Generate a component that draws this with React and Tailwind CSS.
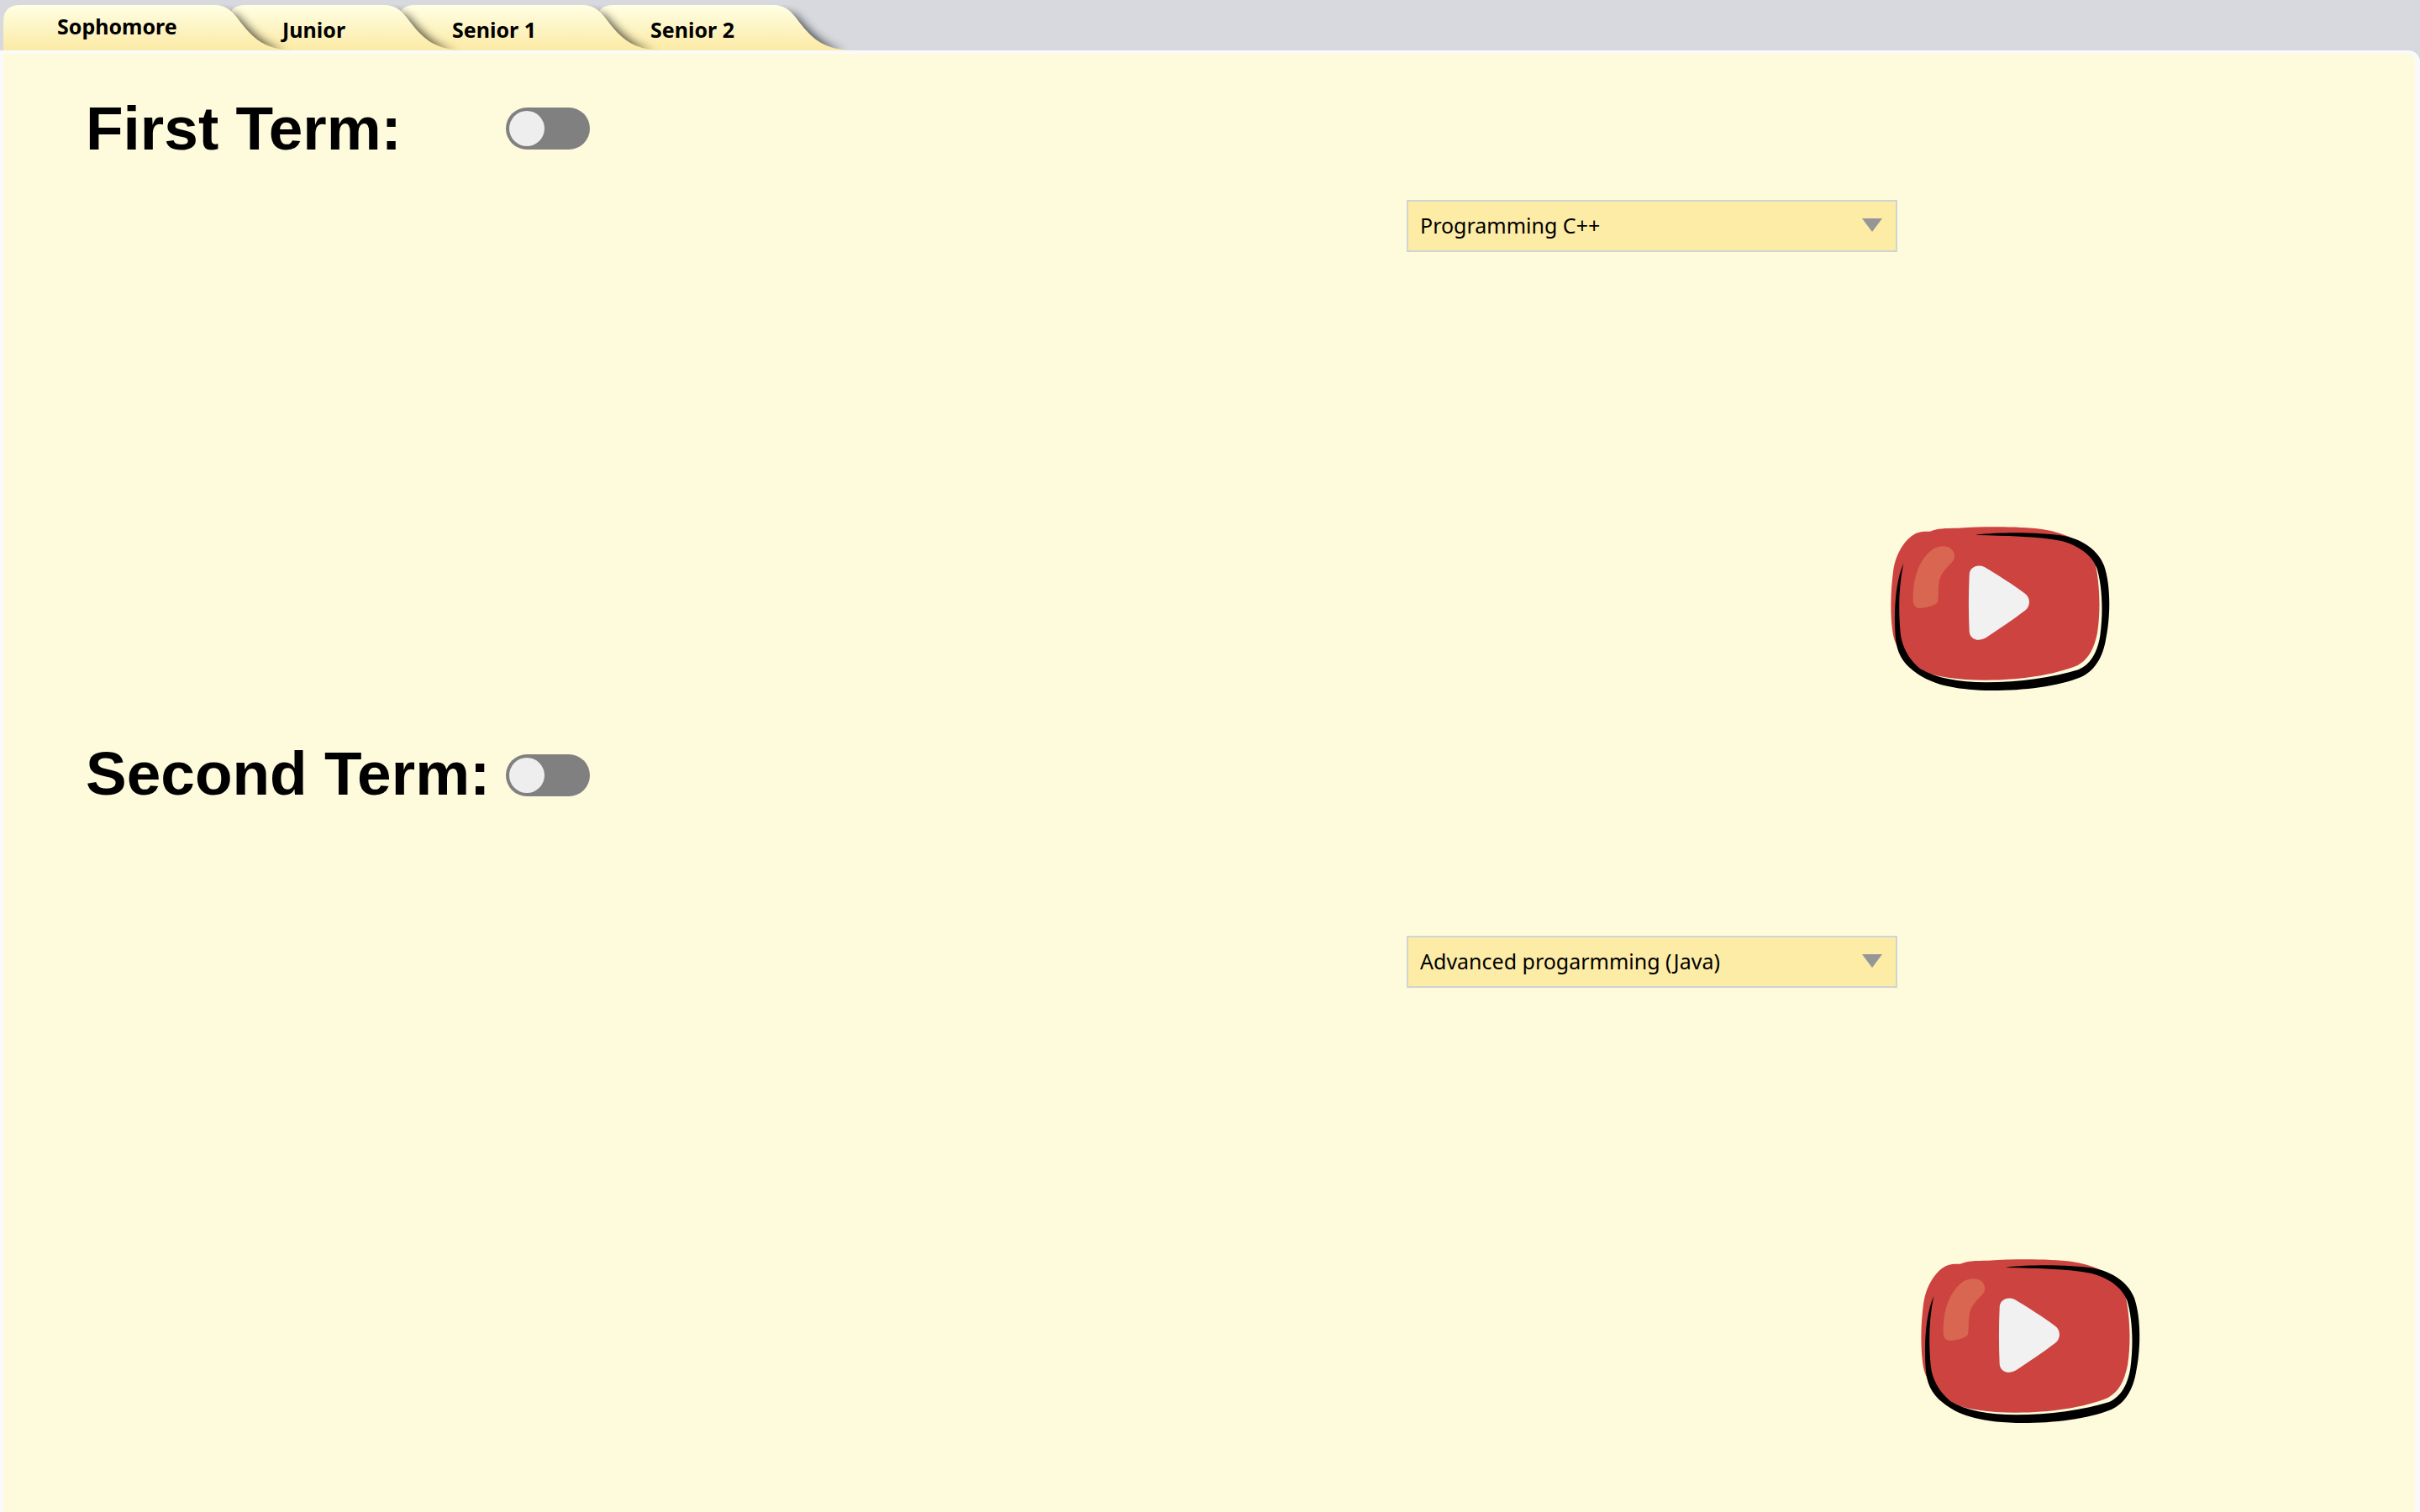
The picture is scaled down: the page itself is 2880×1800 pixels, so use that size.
import { useState } from "react";

const TABS = [
  { name: "Sophomore", width: 343, box: "w-[343px] pb-1" },
  { name: "Junior", width: 277, box: "-ml-[75px] w-[277px] pt-1" },
  { name: "Senior 1", width: 311, box: "-ml-[75px] w-[311px] pt-1" },
  { name: "Senior 2", width: 302, box: "-ml-[75px] w-[302px] pt-1" },
];

const LAYERS = ["z-40", "z-30", "z-20", "z-10"];

function TabShape({ id, w }) {
  const slope = `C${w - 78},0 ${w - 71},7 ${w - 64},16 C${w - 46},40 ${w - 32},54 ${w + 6},54`;
  return (
    <svg
      className="absolute left-0 top-0 -z-10 overflow-hidden"
      width={w + 24}
      height="54"
      viewBox={`0 0 ${w + 24} 54`}
      aria-hidden="true"
    >
      <defs>
        <linearGradient id={`fill-${id}`} x1="0" y1="0" x2="0" y2="1">
          <stop offset="0" stopColor="#ffffe4" />
          <stop offset="1" stopColor="#fceaa5" />
        </linearGradient>
        <filter id={`blur-${id}`} x="-50%" y="-50%" width="200%" height="200%">
          <feGaussianBlur stdDeviation="6" />
        </filter>
      </defs>
      <path
        d={`M${w - 88},8 L${w - 66},12 C${w - 44},36 ${w - 32},50 ${w - 6},56 H${w - 80} Z`}
        fill="#000"
        opacity="0.7"
        filter={`url(#blur-${id})`}
      />
      <path d={`M0,54 V20 Q0,0 20,0 H${w - 92} ${slope} Z`} fill={`url(#fill-${id})`} />
    </svg>
  );
}

function PlayIcon() {
  return (
    <svg className="h-[200px] w-[266px]" viewBox="48 45 798 600" aria-hidden="true">
      <path
        fill="#cc4340"
        d="M200,68 C230,56 250,57 300,56 C400,50 520,50 600,60 C690,74 770,112 788,170 C805,240 812,340 798,430 C786,490 765,525 728,546 C640,582 520,599 400,599 C300,599 220,588 170,565 C120,540 85,495 72,450 C58,390 58,290 70,205 C78,150 110,95 150,75 C170,67 185,68 200,68 Z"
      />
      <path
        fill="#000"
        d="M365,80 C450,70 590,70 680,84 C750,98 802,138 822,190 C848,265 844,380 828,455 C818,515 790,565 740,588 C650,624 520,638 400,636 C260,632 190,605 140,565 C95,530 80,490 77,440 C70,340 80,240 106,182 C88,270 88,350 95,430 C100,480 125,525 165,558 C220,592 300,606 400,607 C520,607 640,590 730,562 C780,540 800,490 808,440 C820,350 815,260 796,198 C778,152 730,118 670,102 C580,84 470,84 365,81 Z"
      />
      <path
        fill="#d96650"
        d="M140,315 C138,230 165,160 215,128 C260,108 295,130 287,165 C280,185 240,205 233,250 C229,280 232,300 228,320 C220,332 190,340 165,342 C150,342 141,332 140,315 Z"
      />
      <path
        fill="#f1f1f1"
        d="M341,225 C341,195 370,184 395,195 C440,222 500,260 540,290 C560,305 560,335 540,350 C495,385 440,420 400,448 C370,465 342,450 341,425 C338,360 338,290 341,225 Z"
      />
    </svg>
  );
}

function Term({ id, title, titleClass, course, selectClass, playClass }) {
  return (
    <section>
      <div className="flex h-[50px] items-center pl-[98px]">
        <label
          htmlFor={`${id}-switch`}
          className={`w-[500px] shrink-0 whitespace-nowrap text-[73px] leading-[80px] font-bold ${titleClass}`}
        >
          {title}
        </label>
        <input
          id={`${id}-switch`}
          type="checkbox"
          role="switch"
          className="h-[50px] w-[100px] shrink-0 appearance-none rounded-full bg-[#808080] p-1 before:block before:size-[42px] before:rounded-full before:bg-[#eeeeee] checked:before:ml-[50px]"
        />
      </div>
      <div className={`relative h-[62px] w-[584px] ${selectClass}`}>
        <select
          aria-label={`${title} course`}
          className="size-full appearance-none border-2 border-[#d0d4d2] bg-[#fdeca6] pl-[14px] font-['Noto_Sans','Open_Sans',sans-serif] text-[25px] text-black"
        >
          <option>{course}</option>
        </select>
        <svg
          className="pointer-events-none absolute right-[18px] top-[22px]"
          width="24"
          height="16"
          viewBox="0 0 24 16"
          aria-hidden="true"
        >
          <path d="M0,0 H24 L12,16 Z" fill="#969696" />
        </svg>
      </div>
      <button type="button" aria-label={`Play ${course}`} className={`block ${playClass}`}>
        <PlayIcon />
      </button>
    </section>
  );
}

export default function App() {
  const [active, setActive] = useState("Sophomore");
  return (
    <div className="flex min-h-screen flex-col bg-[#d8d9df] font-['Liberation_Sans',Arial,sans-serif] text-black">
      <nav role="tablist" className="flex h-[60px] pl-1 pt-[6px]">
        {TABS.map((tab, i) => (
          <button
            key={tab.name}
            type="button"
            role="tab"
            aria-selected={active === tab.name}
            onClick={() => setActive(tab.name)}
            className={`relative isolate h-[54px] shrink-0 whitespace-nowrap pl-16 text-left font-['Noto_Sans','Open_Sans',sans-serif] text-[25px] leading-[32px] font-bold ${tab.box} ${LAYERS[i]}`}
          >
            <TabShape id={i} w={tab.width} />
            {tab.name}
          </button>
        ))}
      </nav>
      <main className="flex-1 rounded-tr-[14px] border-l-4 border-r-[6px] border-t-4 border-[#fafafa] bg-[#fefadc] pt-16">
        <Term
          id="first"
          title="First Term:"
          titleClass=""
          course="Programming C++"
          selectClass="mt-[60px] ml-[58.19%]"
          playClass="mt-[325px] ml-[78.12%]"
        />
        <div className="h-[73px]" />
        <Term
          id="second"
          title="Second Term:"
          titleClass="pb-1"
          course="Advanced progarmming (Java)"
          selectClass="mt-[166px] ml-[58.19%]"
          playClass="mt-[321px] ml-[79.37%]"
        />
      </main>
    </div>
  );
}
